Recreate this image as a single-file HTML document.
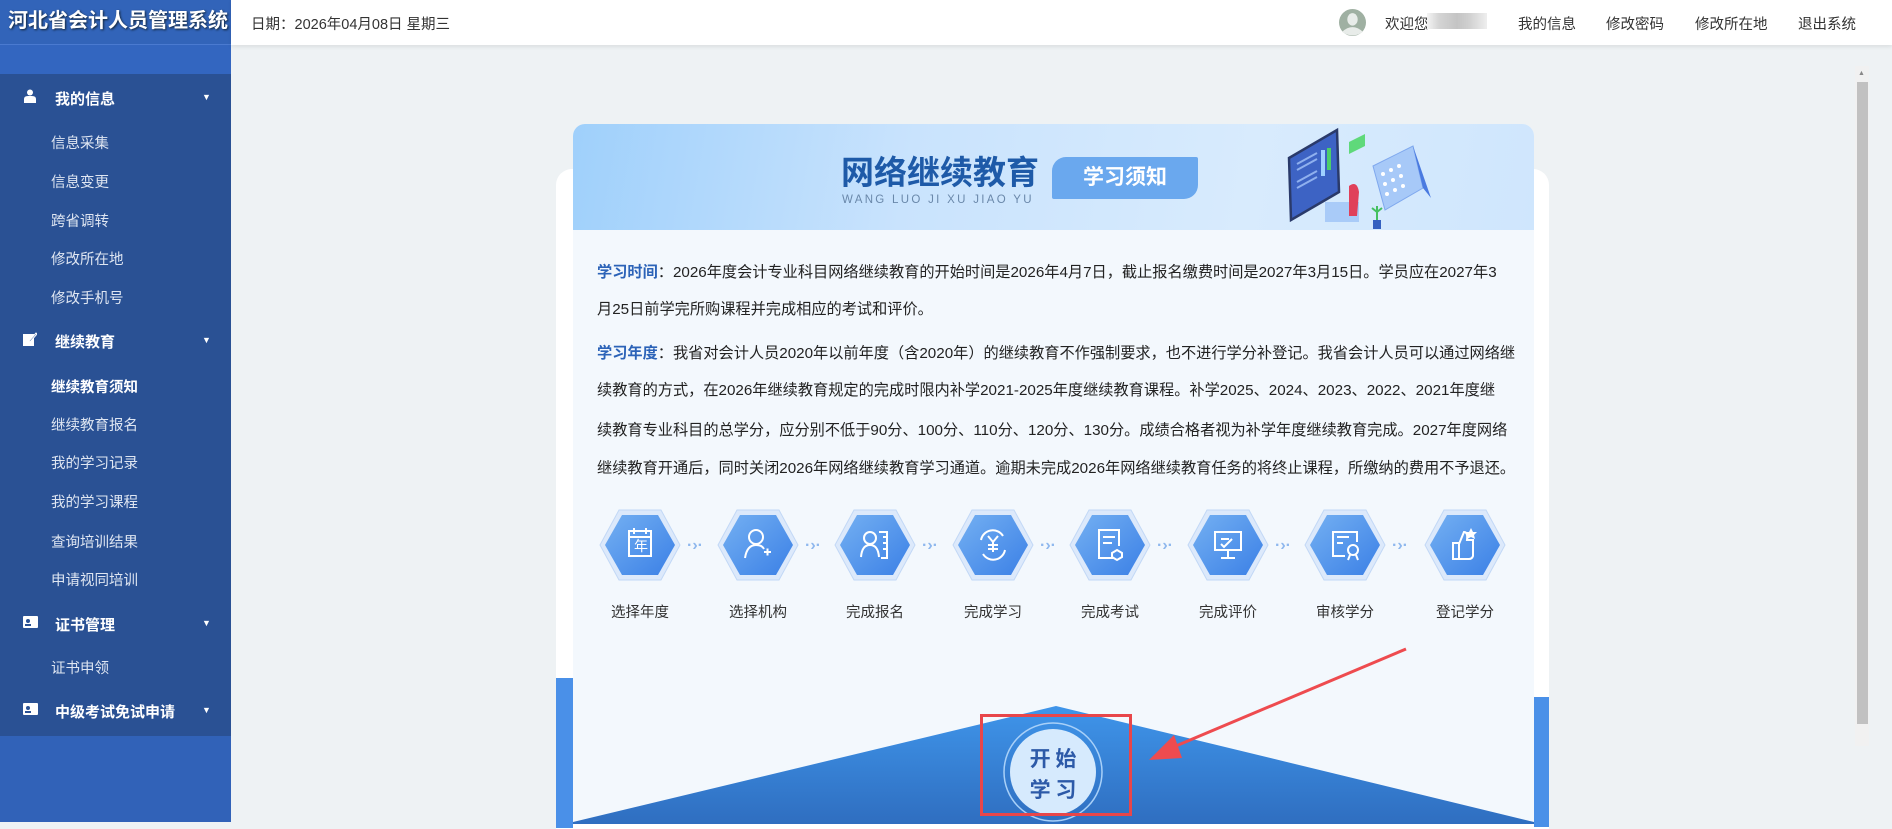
<!DOCTYPE html>
<html><head><meta charset="utf-8">
<style>
*{margin:0;padding:0;box-sizing:border-box}
body{width:1892px;height:822px;overflow:hidden;background:#eef2f4;font-family:"Liberation Sans","Noto Sans CJK SC",sans-serif;position:relative}
.side{position:absolute;left:0;top:0;width:231px;height:822px;background:#3162b8}
.logo{height:45px;background:#3264b9;color:#fff;font-size:20px;font-weight:bold;line-height:42px;padding-left:8px;text-shadow:1px 1px 2px #123;border-bottom:1px solid #4a7ad0}
.band{height:29px;background:#3366c0}
.menu{background:#2a5194;height:662px;position:relative}
.menu div{position:absolute;color:#dfe6f2;font-size:14.5px;white-space:nowrap}
.menu .h{left:55px;color:#fff;font-weight:bold;font-size:15px}
.menu .s{left:51px}
.menu .car{position:absolute;left:202px;font-size:9px;color:#fff}
.top{position:absolute;left:231px;top:0;right:0;height:45px;background:#fff;box-shadow:0 2px 4px rgba(0,0,0,.08)}
.top span{position:absolute;top:13px;font-size:14.5px;color:#333;white-space:nowrap}
.card{position:absolute;left:556px;top:169px;width:993px;height:660px;background:#fff;border-radius:16px 16px 0 0}
.inner{position:absolute;left:573px;top:124px;width:961px;height:700px;background:#f3f8fd;border-radius:12px 12px 0 0;overflow:hidden}
.banner{position:absolute;left:0;top:0;width:961px;height:106px;background:linear-gradient(100deg,#9fd0fb 0%,#c9e3fd 35%,#d8ebfd 70%,#cfe6fd 100%)}
.p{position:absolute;left:24px;font-size:15.2px;color:#222;white-space:nowrap;line-height:20px}
.p b{color:#2c63b8;font-weight:bold}
.lbl{position:absolute;top:477px;font-size:14.5px;color:#333;width:100px;text-align:center;margin-left:-50px;white-space:nowrap}
</style></head><body>
<div class="side">
<div class="logo">河北省会计人员管理系统</div>
<div class="band"></div>
<div class="menu">
<svg style="position:absolute;left:23px;top:15px" width="14" height="14" viewBox="0 0 14 14"><circle cx="7" cy="3.5" r="3" fill="#fff"/><path d="M1 14 V10 Q1 7 5 7 H9 Q13 7 13 10 V14Z" fill="#fff"/></svg>
<div class="h" style="top:14px">我的信息</div><div class="car" style="top:18px">▼</div>
<div class="s" style="top:58px">信息采集</div>
<div class="s" style="top:97px">信息变更</div>
<div class="s" style="top:136px">跨省调转</div>
<div class="s" style="top:174px">修改所在地</div>
<div class="s" style="top:213px">修改手机号</div>
<svg style="position:absolute;left:23px;top:258px" width="14" height="14" viewBox="0 0 14 14"><rect x="0" y="2" width="11" height="12" fill="#fff"/><path d="M6 9 L13 1 L14 2 L7 10Z" fill="#2a5194" stroke="#fff" stroke-width="1"/></svg>
<div class="h" style="top:257px">继续教育</div><div class="car" style="top:261px">▼</div>
<div class="s" style="top:302px;color:#fff;font-weight:bold">继续教育须知</div>
<div class="s" style="top:340px">继续教育报名</div>
<div class="s" style="top:378px">我的学习记录</div>
<div class="s" style="top:417px">我的学习课程</div>
<div class="s" style="top:457px">查询培训结果</div>
<div class="s" style="top:495px">申请视同培训</div>
<svg style="position:absolute;left:23px;top:542px" width="15" height="12" viewBox="0 0 15 12"><rect width="15" height="12" rx="1" fill="#fff"/><circle cx="5" cy="5" r="2" fill="#2a5194"/><rect x="2" y="8" width="6" height="2" fill="#2a5194"/></svg>
<div class="h" style="top:540px">证书管理</div><div class="car" style="top:544px">▼</div>
<div class="s" style="top:583px">证书申领</div>
<svg style="position:absolute;left:23px;top:629px" width="15" height="12" viewBox="0 0 15 12"><rect width="15" height="12" rx="1" fill="#fff"/><circle cx="5" cy="5" r="2" fill="#2a5194"/><rect x="2" y="8" width="6" height="2" fill="#2a5194"/></svg>
<div class="h" style="top:627px">中级考试免试申请</div><div class="car" style="top:631px">▼</div>
</div>
</div>
<div class="top">
<span style="left:20px">日期：2026年04月08日 星期三</span>
<svg style="position:absolute;left:1108px;top:9px" width="27" height="27" viewBox="0 0 26 26"><circle cx="13" cy="13" r="13" fill="#9fb0a2"/><ellipse cx="13" cy="10" rx="5" ry="6" fill="#e8ece9"/><path d="M3 22 Q13 13 23 22 Q13 29 3 22Z" fill="#e8ece9"/></svg>
<span style="left:1154px">欢迎您</span>
<div style="position:absolute;left:1196px;top:13px;width:60px;height:16px;background:linear-gradient(90deg,#f4f4f4,#d4d4d4 20%,#c4c4c4 50%,#d0d0d0 70%,#eee)"></div>
<span style="left:1287px">我的信息</span>
<span style="left:1375px">修改密码</span>
<span style="left:1464px">修改所在地</span>
<span style="left:1567px">退出系统</span>
</div>
<div style="position:absolute;left:1855px;top:66px;width:14px;height:680px;background:#f1f1f1"></div>
<div style="position:absolute;left:1858px;top:70px;font-size:7px;color:#888">▲</div>
<div style="position:absolute;left:1857px;top:82px;width:11px;height:642px;background:#c1c1c1"></div>

<div class="card"></div>
<div style="position:absolute;left:556px;top:678px;width:17px;height:150px;background:#4a90e8"></div>
<div style="position:absolute;left:1534px;top:697px;width:15px;height:130px;background:#4a90e8"></div>
<div class="inner">
<div class="banner">
<div style="position:absolute;left:268px;top:26px;font-size:33px;line-height:40px;font-weight:bold;color:#1e5aa8;white-space:nowrap;font-family:'Noto Sans CJK SC',sans-serif">网络继续教育</div>
<div style="position:absolute;left:269px;top:70px;font-size:11.5px;color:#6a88aa;letter-spacing:2.3px;white-space:nowrap">WANG LUO JI XU JIAO YU</div>
<div style="position:absolute;left:479px;top:33px;width:146px;height:42px;background:#6aa8ee;border-radius:14px 2px 14px 2px;color:#fff;font-size:21px;font-weight:bold;line-height:42px;text-align:center">学习须知</div>
<svg style="position:absolute;left:700px;top:0" width="200" height="106" viewBox="0 0 200 106">
<polygon points="16,34 64,6 66,68 18,96" fill="#3d63c4" stroke="#2a3a6a" stroke-width="2.5"/>
<path d="M24 40 l20 -11 M24 46 l20 -11 M24 58 l20 -11 M24 64 l20 -11" stroke="#8fb0ee" stroke-width="2"/>
<rect x="48" y="26" width="4" height="26" fill="#9fd0ff"/><rect x="54" y="24" width="4" height="22" fill="#4ccf6a"/>
<polygon points="76,18 92,10 92,22 76,30" fill="#5fd97a"/>
<polygon points="100,42 140,22 150,64 112,86" fill="#a7c9f8" stroke="#7fa8ee"/>
<g fill="#fff"><circle cx="110" cy="50" r="2"/><circle cx="118" cy="46" r="2"/><circle cx="126" cy="42" r="2"/><circle cx="112" cy="60" r="2"/><circle cx="120" cy="56" r="2"/><circle cx="128" cy="52" r="2"/><circle cx="114" cy="70" r="2"/><circle cx="122" cy="66" r="2"/><circle cx="130" cy="62" r="2"/></g>
<polygon points="140,22 158,74 150,64" fill="#4a7ae0"/>
<rect x="52" y="78" width="34" height="20" fill="#a9cbf8"/><path d="M76 62 q8 -6 10 6 l-2 24 h-8z" fill="#e0405a"/>
<path d="M104 82 v14 M99 84 l5 4 l5 -4" stroke="#44c060" stroke-width="2" fill="none"/><rect x="100" y="96" width="8" height="9" fill="#3460c0"/>
</svg>
</div>
<div class="p" style="top:139px"><b>学习时间</b>：2026年度会计专业科目网络继续教育的开始时间是2026年4月7日，截止报名缴费时间是2027年3月15日。学员应在2027年3</div>
<div class="p" style="top:176px">月25日前学完所购课程并完成相应的考试和评价。</div>
<div class="p" style="top:220px"><b>学习年度</b>：我省对会计人员2020年以前年度（含2020年）的继续教育不作强制要求，也不进行学分补登记。我省会计人员可以通过网络继</div>
<div class="p" style="top:257px">续教育的方式，在2026年继续教育规定的完成时限内补学2021-2025年度继续教育课程。补学2025、2024、2023、2022、2021年度继</div>
<div class="p" style="top:297px">续教育专业科目的总学分，应分别不低于90分、100分、110分、120分、130分。成绩合格者视为补学年度继续教育完成。2027年度网络</div>
<div class="p" style="top:335px">继续教育开通后，同时关闭2026年网络继续教育学习通道。逾期未完成2026年网络继续教育任务的将终止课程，所缴纳的费用不予退还。</div>

<svg style="position:absolute;left:0;top:380px" width="961" height="90" viewBox="0 0 961 90">
<defs><linearGradient id="g" x1="0" y1="0" x2="1" y2="1"><stop offset="0" stop-color="#74b0f2"/><stop offset="1" stop-color="#3b80e6"/></linearGradient>
<g id="hx">
<polygon points="-40,0 -21,-35 21,-35 40,0 21,35 -21,35" fill="#dce9fb" stroke="#c2d8f6" stroke-width="1"/>
<polygon points="-35,0 -18,-30 18,-30 35,0 18,30 -18,30" fill="url(#g)"/>
</g></defs>
<use href="#hx" x="67" y="41"/><use href="#hx" x="185" y="41"/><use href="#hx" x="302" y="41"/><use href="#hx" x="420" y="41"/><use href="#hx" x="537" y="41"/><use href="#hx" x="655" y="41"/><use href="#hx" x="772" y="41"/><use href="#hx" x="892" y="41"/>
<g fill="none" stroke="#fff" stroke-width="2">
<rect x="56" y="27" width="22" height="25"/><path d="M56 33h22M61 24v6M73 24v6"/>
<circle cx="183" cy="33" r="7"/><path d="M172 54 q2 -13 11 -13 q6 0 8 4 M191 48 h7 M194.5 44.5 v7"/>
<circle cx="297" cy="34" r="6"/><path d="M288 53 q1 -12 9 -12 q8 0 9 12 M306 28 h8 v26 h-6 M310 33h4M310 39h4M310 45h4"/>
<path d="M408 36 a12 12 0 0 1 22 -4 M432 46 a12 12 0 0 1 -22 4 M415 32l5 6 5-6M420 38v10M415 41h10M415 45h10"/>
<path d="M540 54 h-14 v-28 h20 v16 M530 33h12M530 39h9"/><path d="M544 46 l5 3 v4 l-5 3 l-5 -3 v-4z"/>
<rect x="642" y="28" width="26" height="18"/><path d="M655 46v7M648 54h14M648 35h8M648 40l3 3 8 -8"/>
<path d="M772 52 h-12 v-24 h24 v10 M764 33h12M764 39h6"/><circle cx="780" cy="46" r="5"/><path d="M777 51l-2 5M783 51l2 5"/>
<path d="M880 55 v-16 h6 v16z M886 40 l5 -12 q4 0 3 8 h6 v16 q-1 3 -4 3 h-10"/>
</g>
<text x="61" y="47" font-size="14" fill="#fff" font-family="Noto Sans CJK SC,sans-serif">年</text>
<path d="M898 24 l2 4 4 0 -3 3 1 4 -4 -2 -4 2 1 -4 -3 -3 4 0z" fill="#fff"/>
<g fill="#8fb8ee" font-size="16" font-weight="bold"><text x="114" y="46">·›·</text><text x="232" y="46">·›·</text><text x="349" y="46">·›·</text><text x="467" y="46">·›·</text><text x="584" y="46">·›·</text><text x="702" y="46">·›·</text><text x="819" y="46">·›·</text></g>
</svg>
<div class="lbl" style="left:67px">选择年度</div><div class="lbl" style="left:185px">选择机构</div><div class="lbl" style="left:302px">完成报名</div><div class="lbl" style="left:420px">完成学习</div><div class="lbl" style="left:537px">完成考试</div><div class="lbl" style="left:655px">完成评价</div><div class="lbl" style="left:772px">审核学分</div><div class="lbl" style="left:892px">登记学分</div>

<svg style="position:absolute;left:0;top:580px" width="961" height="120" viewBox="0 0 961 120">
<defs><linearGradient id="t" x1="0" y1="0" x2="0" y2="1"><stop offset="0" stop-color="#3f95ea"/><stop offset="1" stop-color="#2f6ec0"/></linearGradient></defs>
<polygon points="483,2 961,118 961,120 0,120 0,118" fill="url(#t)"/>
<circle cx="480" cy="68" r="49" fill="none" stroke="#a8d0f8" stroke-width="1.5"/>
<circle cx="480" cy="68" r="43" fill="#d6eafd"/>
<text x="480" y="62" text-anchor="middle" font-size="21" font-weight="bold" fill="#2d5aa8" font-family="Noto Sans CJK SC,sans-serif">开 始</text>
<text x="480" y="93" text-anchor="middle" font-size="21" font-weight="bold" fill="#2d5aa8" font-family="Noto Sans CJK SC,sans-serif">学 习</text>
</svg>
</div>
<div style="position:absolute;left:980px;top:714px;width:152px;height:102px;border:3px solid #e8464a"></div>
<svg style="position:absolute;left:1140px;top:640px" width="270" height="130" viewBox="0 0 270 130">
<line x1="266" y1="9" x2="24" y2="111" stroke="#ee4b4f" stroke-width="3"/>
<polygon points="9,120 34,95 42,118" fill="#ee4b4f"/>
</svg>
</body></html>
